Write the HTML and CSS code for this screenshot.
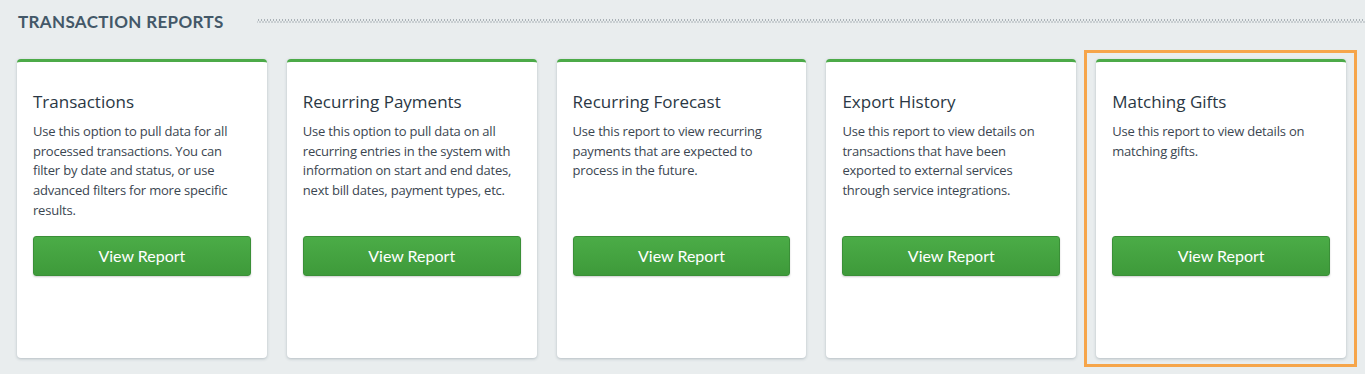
FILE: index.html
```html
<!DOCTYPE html>
<html lang="en">
    <head>
        <meta charset="utf-8" />
        <title>Transaction Reports</title>
        <link rel="stylesheet" href="styles.css">
    </head>
    <body>
        <div id="wrapper">
            <div class="section-head">
                <h2>Transaction Reports</h2>
                <div class="dots"></div>
            </div>

            <div class="reports">
                <div class="report">
                    <h3>Transactions</h3>
                    <p>Use this option to pull data for all processed transactions. You can filter by date and status, or use advanced filters for more specific results.</p>
                    <a class="btn" href="#">View Report</a>
                </div>
                <div class="report">
                    <h3>Recurring Payments</h3>
                    <p>Use this option to pull data on all recurring entries in the system with information on start and end dates, next bill dates, payment types, etc.</p>
                    <a class="btn" href="#">View Report</a>
                </div>
                <div class="report">
                    <h3>Recurring Forecast</h3>
                    <p>Use this report to view recurring payments that are expected to process in the future.</p>
                    <a class="btn" href="#">View Report</a>
                </div>
                <div class="report">
                    <h3>Export History</h3>
                    <p>Use this report to view details on transactions that have been exported to external services through service integrations.</p>
                    <a class="btn" href="#">View Report</a>
                </div>
                <div class="report highlight">
                    <h3>Matching Gifts</h3>
                    <p>Use this report to view details on matching gifts.</p>
                    <a class="btn" href="#">View Report</a>
                </div>
            </div>
        </div>
    </body>
</html>
```

FILE: styles.css
```css
* {
    margin: 0;
    padding: 0;
    box-sizing: border-box;
  }

  body {
    background: #e9edee;
    font-family: "Open Sans", sans-serif;
  }

  #wrapper {
    padding: 11px 19px 16px 17px;
  }

  .section-head {
    display: flex;
    align-items: center;
    gap: 33px;
    padding-left: 1px;
    height: 20px;
  }

  .section-head h2 {
    font-family: "Lato", sans-serif;
    font-size: 17px;
    font-weight: 700;
    letter-spacing: 0.35px;
    text-transform: uppercase;
    color: #435868;
    white-space: nowrap;
  }

  .dots {
    flex: 1;
    height: 4px;
    margin-right: -19px;
    background-image:
      radial-gradient(circle, #a9b1b6 0.7px, transparent 0.8px),
      radial-gradient(circle, #a9b1b6 0.7px, transparent 0.8px);
    background-size: 3px 4px;
    background-position: 0 -1px, 1.5px 1px;
  }

  .reports {
    display: grid;
    grid-template-columns: repeat(5, 1fr);
    gap: 20px;
    margin-top: 28px;
  }

  .report {
    position: relative;
    height: 299px;
    background: #fff;
    border-top: 3px solid #4caa48;
    border-radius: 4px;
    box-shadow: 0 1px 3px rgba(60, 80, 95, 0.3);
    padding: 29px 16px 0 16px;
  }

  .report h3 {
    font-size: 17px;
    font-weight: 400;
    line-height: 22px;
    color: #2a3744;
  }

  .report p {
    margin-top: 9px;
    height: 100px;
    font-size: 13px;
    line-height: 19.7px;
    letter-spacing: -0.2px;
    color: #3b4651;
  }

  .btn {
    display: block;
    height: 40px;
    margin-top: 14px;
    border: 1px solid #3a8f37;
    border-radius: 3px;
    background: linear-gradient(#4bac47, #3e9a3a);
    box-shadow: 0 1px 2px rgba(0, 0, 0, 0.2);
    color: #fff;
    font-family: "Lato", sans-serif;
    font-size: 16px;
    line-height: 38px;
    text-align: center;
    text-decoration: none;
  }

  /* highlight frame drawn over the card's surroundings */
  .highlight::after {
    content: "";
    position: absolute;
    top: -12px;
    left: -12px;
    right: -11px;
    bottom: -9px;
    border: 3px solid #f6a54a;
    pointer-events: none;
  }
```
